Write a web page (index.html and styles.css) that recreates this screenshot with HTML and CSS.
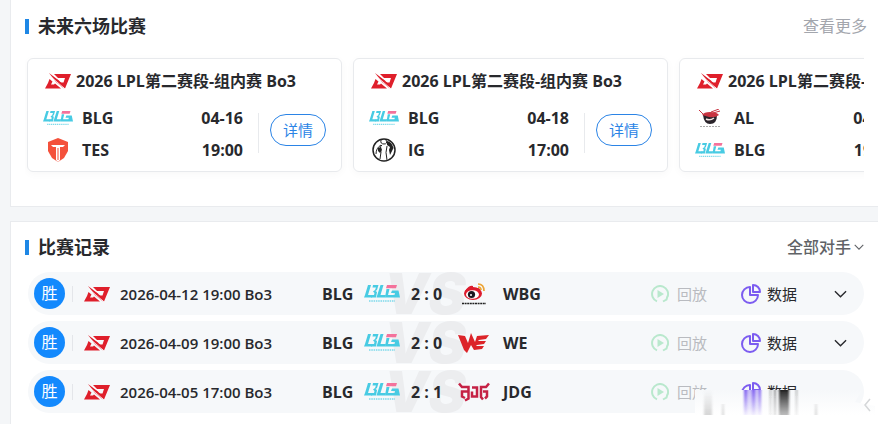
FILE: index.html
```
<!DOCTYPE html>
<html lang="zh-CN">
<head>
  <meta charset="UTF-8">
  <meta name="viewport" content="width=device-width, initial-scale=1">
  <title>BLG</title>
  <link rel="stylesheet" href="styles.css">
</head>
<body>
  <!-- shared logos and icons -->
  <svg class="sprite" aria-hidden="true">
    <symbol id="lpl" viewBox="0 0 26 16">
      <path fill="#df1f2b" d="M9 1H26L20 15.500L8 5L16.500 9.500H18.500L20 5H13Z"/>
      <path fill="#df1f2b" d="M4.500 6L7.500 8.500L6 11.500H9L10 10.500L16 15.500H0L3 10Z"/>
      <path fill="#df1f2b" d="M4 0L14 7.500L19 15.500L11 9Z"/>
      <path stroke="#fff" stroke-width=".8" d="M5 3L19.500 15.500M7 1L15 7.500"/>
    </symbol>
    <symbol id="blg" viewBox="0 0 36 18">
      <path fill="#48cbe3" d="M4 0H7L4 10H9L8 12.500H0L1 10Z"/>
      <path fill="#48cbe3" d="M9 0H14.500L13 5L11.500 6L13 7L12 12.500H7L8 10H10L10.500 8L9 6.500L11 5L12 2.500H8.500Z"/>
      <path fill="#48cbe3" d="M16.500 0H19.500L16.500 10H22L21 12.500H12.500Z"/>
      <path fill="#48cbe3" d="M22.500 4H25.500L24 10H30.500L31 8H27L28 5.500H34.500L36 12.500H21Z"/>
      <path fill="#f4729b" d="M23 0H33L32 3.200H22Z"/>
      <path stroke="#48cbe3" stroke-width="1.600" stroke-dasharray="1.500 .8" opacity=".7" d="M5 16H31"/>
    </symbol>
    <symbol id="tes" viewBox="0 0 20 24">
      <path fill="#f4513b" d="M10 0L20 4V13L16 20L10 24L4 20L0 13V4Z"/>
      <path fill="#fff" d="M3 7H17L15 9H12V22L10 24L8 22V9H5Z"/>
      <path fill="#f4513b" d="M9.500 10H10.500V22H9.500Z"/>
    </symbol>
    <symbol id="ig" viewBox="0 0 24 24">
      <circle cx="12" cy="12" r="11" fill="#fff" stroke="#222" stroke-width="1.500"/>
      <path fill="#222" d="M15 3Q20 4 21.500 10L18 17L17 12L18 9L15 7ZM6 10L9 9L10 12L8 15L6 13Z"/>
      <path fill="none" stroke="#222" d="M9 2Q8 6 12 6Q16 6 14 2M9 7Q4 10 4 16M10 7Q7 9 9 14L8 21M15 8Q13 14 15 22"/>
    </symbol>
    <symbol id="al" viewBox="0 0 22 18">
      <path fill="#29232a" d="M4 6Q5 15 11 15Q18 15 18 6Z"/>
      <path fill="none" stroke="#f3e3e0" stroke-width="1.500" d="M7 10Q11 12 15 9"/>
      <path fill="#c83340" d="M3 6Q5 3 11 3Q18 3 20 6Q16 9 10 8Z"/>
      <path fill="none" stroke="#c83340" stroke-width="1" d="M0 1L5 6M12 3L20 0M14 4L21 2"/>
      <path stroke="#aaa" stroke-dasharray="2 1" d="M1 17.500H21"/>
    </symbol>
    <symbol id="wbg" viewBox="0 0 26 22">
      <ellipse cx="12" cy="10.500" rx="9" ry="6.500" fill="#dd1c2e"/>
      <path fill="#dd1c2e" d="M4 8Q8 2 12 3L12 6Q17 4 19 6L18 9Z"/>
      <ellipse cx="11.500" cy="11.500" rx="6.500" ry="4.300" fill="#fff"/>
      <circle cx="10.500" cy="11.500" r="3.600" fill="#1b1720"/>
      <circle cx="10" cy="12" r="1" fill="#fff"/>
      <path fill="none" stroke="#eda536" stroke-width="1.700" d="M17 1Q23 1 23 8M17 4Q20 4 20 7"/>
      <path stroke="#222" stroke-width="1.500" stroke-dasharray="2 .6" d="M1 20.500H25"/>
    </symbol>
    <symbol id="we" viewBox="0 0 32 20">
      <path fill="#dc2429" d="M0 2L7 3L10 10L13 0L17 9L19 3L31 2L28 6L21 7L20 8L28 8L26 11L19 12L18 13L26 13L24 16L16 17L13 12L9 20L6 17Z"/>
    </symbol>
    <symbol id="jdg" viewBox="0 0 32 19">
      <path fill="none" stroke="#c52245" stroke-width="2.500" d="M1 1L4 4.500H10.500V16L7 18M10 9H4V14L7 15.500M14 5H19V14H14V9M31 1L28 4.500H23V14.500L25 17M25 9H29V14L27 16"/>
    </symbol>
    <symbol id="play" viewBox="0 0 18 18">
      <path fill="none" stroke="#b9e8cd" stroke-width="2" d="M6 16.400A8 8 0 1 1 16.500 12M12 16.500L15.500 14.500L16.500 11"/>
      <path fill="#b9e8cd" d="M6.500 5L13 9L6.500 13Z"/>
    </symbol>
    <symbol id="pie" viewBox="0 0 20 20">
      <path fill="none" stroke="#7c5cf0" stroke-width="2" stroke-linejoin="round" d="M9 3A8 8 0 1 0 17 11H9ZM12 1V8H19A7 7 0 0 0 12 1Z"/>
    </symbol>
    <symbol id="down" viewBox="0 0 14 8">
      <path fill="none" stroke="currentColor" stroke-width="1.500" d="M1 1L7 7L13 1"/>
    </symbol>
  </svg>

  <section class="panel upcoming">
    <div class="panel-head">
      <h2>未来六场比赛</h2>
      <a href="#" class="more">查看更多</a>
    </div>
    <div class="card-list">
      <article class="card">
        <h3><svg class="lpl"><use href="#lpl"/></svg>2026 LPL第二赛段-组内赛 Bo3</h3>
        <div class="card-body">
          <div class="teams">
            <div class="team"><svg class="logo blg"><use href="#blg"/></svg><span>BLG</span><time>04-16</time></div>
            <div class="team"><svg class="logo"><use href="#tes"/></svg><span>TES</span><time>19:00</time></div>
          </div>
          <button class="detail">详情</button>
        </div>
      </article>
      <article class="card">
        <h3><svg class="lpl"><use href="#lpl"/></svg>2026 LPL第二赛段-组内赛 Bo3</h3>
        <div class="card-body">
          <div class="teams">
            <div class="team"><svg class="logo blg"><use href="#blg"/></svg><span>BLG</span><time>04-18</time></div>
            <div class="team"><svg class="logo"><use href="#ig"/></svg><span>IG</span><time>17:00</time></div>
          </div>
          <button class="detail">详情</button>
        </div>
      </article>
      <article class="card">
        <h3><svg class="lpl"><use href="#lpl"/></svg>2026 LPL第二赛段-组内赛 Bo3</h3>
        <div class="card-body">
          <div class="teams">
            <div class="team"><svg class="logo al"><use href="#al"/></svg><span>AL</span><time>04-19</time></div>
            <div class="team"><svg class="logo blg"><use href="#blg"/></svg><span>BLG</span><time>19:00</time></div>
          </div>
          <button class="detail">详情</button>
        </div>
      </article>
    </div>
  </section>

  <section class="panel history">
    <div class="panel-head">
      <h2>比赛记录</h2>
      <button class="filter">全部对手<svg><use href="#down"/></svg></button>
    </div>
    <ul class="records">
      <li class="record">
        <span class="result">胜</span>
        <svg class="lpl"><use href="#lpl"/></svg>
        <time>2026-04-12 19:00 Bo3</time>
        <div class="match">
          <span class="vs">VS</span>
          <span class="home">BLG</span>
          <svg class="blg"><use href="#blg"/></svg>
          <span class="score">2 : 0</span>
          <svg class="away-logo"><use href="#wbg"/></svg>
          <span>WBG</span>
        </div>
        <button class="replay" disabled><svg><use href="#play"/></svg>回放</button>
        <button class="data"><svg><use href="#pie"/></svg>数据</button>
        <button class="expand" aria-label="展开"><svg><use href="#down"/></svg></button>
      </li>
      <li class="record">
        <span class="result">胜</span>
        <svg class="lpl"><use href="#lpl"/></svg>
        <time>2026-04-09 19:00 Bo3</time>
        <div class="match">
          <span class="vs">VS</span>
          <span class="home">BLG</span>
          <svg class="blg"><use href="#blg"/></svg>
          <span class="score">2 : 0</span>
          <svg class="away-logo"><use href="#we"/></svg>
          <span>WE</span>
        </div>
        <button class="replay" disabled><svg><use href="#play"/></svg>回放</button>
        <button class="data"><svg><use href="#pie"/></svg>数据</button>
        <button class="expand" aria-label="展开"><svg><use href="#down"/></svg></button>
      </li>
      <li class="record">
        <span class="result">胜</span>
        <svg class="lpl"><use href="#lpl"/></svg>
        <time>2026-04-05 17:00 Bo3</time>
        <div class="match">
          <span class="vs">VS</span>
          <span class="home">BLG</span>
          <svg class="blg"><use href="#blg"/></svg>
          <span class="score">2 : 1</span>
          <svg class="away-logo"><use href="#jdg"/></svg>
          <span>JDG</span>
        </div>
        <button class="replay" disabled><svg><use href="#play"/></svg>回放</button>
        <button class="data"><svg><use href="#pie"/></svg>数据</button>
        <button class="expand hidden" aria-label="展开"><svg><use href="#down"/></svg></button>
        <!-- blurred strip over the corner of the last row -->
        <svg class="smear" viewBox="0 0 180 25" aria-hidden="true">
          <defs>
            <linearGradient id="fade" x2="0" y2="1">
              <stop offset="0" stop-color="#f6f8fa"/>
              <stop offset="1" stop-color="#fff"/>
            </linearGradient>
            <linearGradient id="gray" x2="0" y2="1">
              <stop offset="0" stop-color="#999" stop-opacity="0"/>
              <stop offset="1" stop-color="#999" stop-opacity=".4"/>
            </linearGradient>
            <linearGradient id="violet" x2="0" y2="1">
              <stop offset="0" stop-color="#7c5cf0"/>
              <stop offset="1" stop-color="#7c5cf0" stop-opacity=".1"/>
            </linearGradient>
            <linearGradient id="dark" x2="0" y2="1">
              <stop offset="0" stop-color="#222"/>
              <stop offset="1" stop-color="#444" stop-opacity=".35"/>
            </linearGradient>
            <filter id="soft"><feGaussianBlur stdDeviation="1 0"/></filter>
          </defs>
          <path fill="url(#fade)" d="M0 0H167L160 12L180 16V25H0Z"/>
          <g filter="url(#soft)">
            <path fill="url(#gray)" d="M9 0H17V25H9ZM27 14H29V25H27ZM120 14H122V25H120Z"/>
            <path fill="url(#violet)" d="M49 0H52V25H49ZM57 0H60V25H57ZM64 0H66V25H64Z"/>
            <path fill="url(#violet)" opacity=".4" d="M52 0H57V25H52ZM60 0H64V25H60Z"/>
            <path fill="url(#dark)" d="M84 0H94V25H84Z"/>
            <path fill="url(#dark)" opacity=".5" d="M75 0H76V25H75ZM79 0H81V25H79ZM101 0H102V25H101Z"/>
          </g>
          <path fill="none" stroke="#d5d7d9" stroke-width="1.500" d="M175 9L170 15L175 21"/>
        </svg>
      </li>
    </ul>
  </section>
</body>
</html>
```
FILE: styles.css
```
* {
  box-sizing: border-box;
}

body {
  margin: 0;
  background-color: #f4f6f8;
  color: #28292d;
  font-family: "Open Sans", "Noto Sans CJK SC", sans-serif;
  font-size: 16px;
  overflow: hidden;
}

button {
  padding: 0;
  border: none;
  background: none;
  color: inherit;
  font: inherit;
  cursor: pointer;
}

svg {
  flex: none;
}

.sprite {
  position: absolute;
  width: 0;
  height: 0;
}

.panel {
  margin-left: 10px;
  padding: 0 14px;
  background-color: #fff;
  border: 1px solid #e9ebee;
  border-right: none;
}

.upcoming {
  border-top: none;
  padding-bottom: 24px;
}

.history {
  margin-top: 14px;
  padding-bottom: 24px;
}

.panel-head {
  display: flex;
  align-items: center;
  justify-content: space-between;
  height: 52px;
}

.history .panel-head {
  height: 50px;
}

.panel-head h2 {
  display: flex;
  align-items: center;
  gap: 9px;
  margin: 0;
  font-size: 18px;
  line-height: 24px;
}

.panel-head h2::before {
  content: "";
  width: 4px;
  height: 15px;
  background-color: #1e87e5;
}

.more {
  margin-right: -3px;
  color: #a3a6ad;
  line-height: 24px;
  text-decoration: none;
}

.card-list {
  display: flex;
  gap: 11px;
  padding: 6px 0 10px 2px;
  overflow: hidden;
}

.card {
  flex: none;
  width: 315px;
  height: 114px;
  padding: 10px 15px;
  border: 1px solid #e8eaed;
  border-radius: 6px;
  box-shadow: 0 2px 8px rgba(0, 0, 0, 0.03);
}

.card h3 {
  display: flex;
  align-items: center;
  gap: 5px;
  margin: 0 0 9px 2px;
  font-size: 16px;
  font-weight: 700;
  line-height: 24px;
  white-space: nowrap;
}

.lpl {
  width: 26px;
  height: 16px;
}

.card-body {
  display: flex;
  align-items: flex-start;
}

.teams {
  flex: 1;
  padding-right: 15px;
}

.team {
  display: flex;
  align-items: center;
  height: 32px;
  font-weight: 700;
}

.team .logo {
  width: 30px;
  height: 24px;
  margin-right: 9px;
}

.team .blg {
  height: 15px;
}

.team .al {
  height: 18px;
}

.team time {
  margin-left: auto;
}

.detail {
  position: relative;
  width: 56px;
  height: 32px;
  margin: 12px 0 0 12px;
  border: 1px solid #2b84e6;
  border-radius: 16px;
  color: #2b84e6;
  font-size: 15px;
  line-height: 28px;
}

.detail::before {
  content: "";
  position: absolute;
  left: -13px;
  top: -2px;
  height: 40px;
  border-left: 1px solid #e8eaed;
}

.filter {
  display: flex;
  align-items: center;
  gap: 3px;
  color: #606266;
  font-weight: 500;
  line-height: 24px;
}

.filter svg {
  width: 10px;
  height: 6px;
}

.records {
  display: flex;
  flex-direction: column;
  gap: 6px;
  margin: 0;
  padding: 0 0 0 3px;
  list-style: none;
}

.record {
  position: relative;
  display: flex;
  align-items: center;
  height: 43px;
  padding: 0 17px 0 6px;
  border-radius: 22px;
  background-color: #f6f8fa;
}

.result {
  width: 31px;
  height: 31px;
  border-radius: 50%;
  background-color: #1389fd;
  color: #fff;
  line-height: 31px;
  text-align: center;
}

.record .lpl {
  box-sizing: content-box;
  height: 16px;
  margin-left: 7px;
  padding-left: 11px;
  border-left: 1px solid #e4e6ea;
}

.record time {
  width: 202px;
  margin-left: 10px;
  font-size: 15px;
  font-weight: 600;
}

.match {
  position: relative;
  display: grid;
  grid-template-columns: 42px 47px 47px 45px auto;
  align-items: center;
  height: 43px;
  font-weight: 700;
  overflow: hidden;
}

.match > * {
  position: relative;
}

.match .vs {
  position: absolute;
  left: 62px;
  top: 0;
  color: #ecedef;
  font-family: Inter, sans-serif;
  font-size: 56px;
  font-style: italic;
  font-weight: 900;
  line-height: 44px;
}

.match .blg {
  width: 36px;
  height: 18px;
}

.away-logo {
  width: 32px;
  height: 22px;
}

.replay,
.data {
  display: flex;
  align-items: center;
  font-size: 15px;
  line-height: 24px;
}

.replay {
  gap: 8px;
  margin-left: auto;
  color: #b9bbc0;
}

.replay svg {
  width: 18px;
  height: 18px;
}

.data {
  gap: 6px;
  margin-left: 34px;
}

.data svg {
  width: 20px;
  height: 20px;
}

.expand {
  display: flex;
  margin-left: 37px;
}

.expand svg {
  width: 13px;
  height: 8px;
}

.hidden {
  visibility: hidden;
}

.smear {
  position: absolute;
  right: -11px;
  bottom: -2px;
  width: 180px;
  height: 25px;
}
```
